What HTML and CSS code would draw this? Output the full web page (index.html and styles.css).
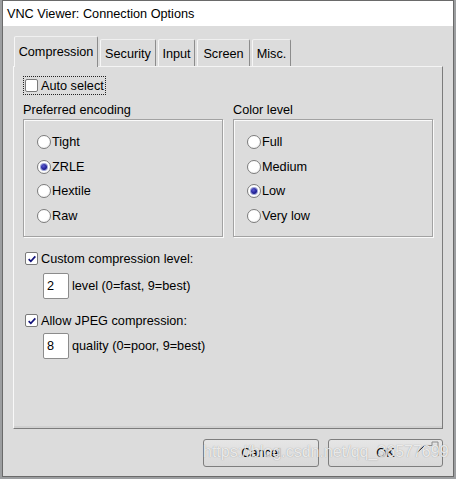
FILE: index.html
```html
<!DOCTYPE html>
<html>
<head>
<meta charset="utf-8">
<link rel="stylesheet" href="styles.css">
</head>
<body>
<div class="window">
  <div class="titlebar">VNC Viewer: Connection Options</div>
  <div class="client">
    <div class="tabs">
      <div class="tab active w-comp">Compression</div>
      <div class="tab w-sec">Security</div>
      <div class="tab w-input">Input</div>
      <div class="tab w-screen">Screen</div>
      <div class="tab w-misc">Misc.</div>
    </div>
    <div class="panel">
      <div class="focus-row">
        <span class="check"></span><span class="lbl">Auto select</span>
      </div>
      <div class="columns">
        <div class="col">
          <div class="group-title">Preferred encoding</div>
          <div class="group">
            <div class="radio-row"><span class="radio"></span><span>Tight</span></div>
            <div class="radio-row"><span class="radio on"></span><span>ZRLE</span></div>
            <div class="radio-row"><span class="radio"></span><span>Hextile</span></div>
            <div class="radio-row"><span class="radio"></span><span>Raw</span></div>
          </div>
        </div>
        <div class="col">
          <div class="group-title">Color level</div>
          <div class="group">
            <div class="radio-row"><span class="radio"></span><span>Full</span></div>
            <div class="radio-row"><span class="radio"></span><span>Medium</span></div>
            <div class="radio-row"><span class="radio on"></span><span>Low</span></div>
            <div class="radio-row"><span class="radio"></span><span>Very low</span></div>
          </div>
        </div>
      </div>
      <div class="check-row first">
        <span class="check"><svg viewBox="0 0 12 12" width="10" height="10"><path d="M2 6.2 L4.6 8.8 L10 2.8" fill="none" stroke="#12127a" stroke-width="2"/></svg></span>
        <span class="lbl">Custom compression level:</span>
      </div>
      <div class="input-row">
        <span class="field">2</span><span class="field-lbl">level (0=fast, 9=best)</span>
      </div>
      <div class="check-row">
        <span class="check"><svg viewBox="0 0 12 12" width="10" height="10"><path d="M2 6.2 L4.6 8.8 L10 2.8" fill="none" stroke="#12127a" stroke-width="2"/></svg></span>
        <span class="lbl">Allow JPEG compression:</span>
      </div>
      <div class="input-row tight">
        <span class="field">8</span><span class="field-lbl">quality (0=poor, 9=best)</span>
      </div>
    </div>
    <div class="buttons">
      <div class="btn">Cancel</div>
      <div class="btn">OK</div>
    </div>
  </div>
</div>
<svg class="grip" width="26" height="16" viewBox="0 0 26 16">
  <path d="M3 12.5 L10 6" stroke="#111" stroke-width="1" fill="none"/>
  <path d="M10.5 5.5 H18 V2 H24 V16" stroke="#8a8a8a" stroke-width="1" fill="none"/>
</svg>
<div class="watermark">https://blog.csdn.net/qq_36577699</div>
</body>
</html>
```

FILE: styles.css
```css
html, body {
  margin: 0;
  padding: 0;
}
body {
  width: 456px;
  height: 479px;
  overflow: hidden;
  position: relative;
  background: #9c9ea0;
  font-family: "Liberation Sans", Arial, sans-serif;
  font-size: 12.7px;
  color: #000;
}
.window {
  margin-left: 2px;
  width: 452px;
  height: 477px;
  box-sizing: border-box;
  border: 1px solid #6a6a6a;
  background: #dcdcdc;
  display: flex;
  flex-direction: column;
}
.titlebar {
  flex: none;
  height: 25px;
  background: #fff;
  padding-left: 4px;
  display: flex;
  align-items: center;
}
.client {
  flex: 1;
  padding: 10px 0 0 10px;
}
.tabs {
  display: flex;
  align-items: flex-end;
  gap: 2px;
  margin-left: 1px;
  height: 30px;
  position: relative;
  z-index: 1;
}
.tab {
  box-sizing: border-box;
  height: 27px;
  border-left: 1px solid #f6f6f6;
  border-top: 1px solid #f0f0f0;
  border-right: 1px solid #8c8c8c;
  border-radius: 2px 2px 0 0;
  background: #dcdcdc;
  display: flex;
  align-items: center;
  justify-content: center;
  padding-top: 2px;
  white-space: nowrap;
}
.tab.active {
  height: 31px;
  margin-bottom: -1px;
  padding-top: 0;
}
.w-comp { width: 84px; }
.w-sec { width: 56px; }
.w-input { width: 37px; }
.w-screen { width: 53px; }
.w-misc { width: 39px; }

.panel {
  box-sizing: border-box;
  width: 430px;
  height: 363px;
  border: 1px solid;
  border-color: #f4f4f4 #7c7c7c #7c7c7c #f8f8f8;
  box-shadow: inset 0 -2px 0 #d0d0d0;
  padding: 9px 0 0 9px;
  display: flex;
  flex-direction: column;
  align-items: flex-start;
}
.focus-row {
  box-sizing: border-box;
  height: 19px;
  border: 1px dotted #222;
  display: flex;
  align-items: center;
  padding: 0 1px 0 1px;
  white-space: nowrap;
}
.check {
  flex: none;
  box-sizing: border-box;
  width: 13px;
  height: 13px;
  background: #fff;
  border: 1px solid #7a7a7a;
  border-radius: 2px;
  display: flex;
  align-items: center;
  justify-content: center;
}
.lbl {
  margin-left: 3px;
  white-space: nowrap;
}
.columns {
  display: flex;
  gap: 10px;
  margin-top: 8px;
}
.col {
  width: 200px;
}
.group-title {
  height: 15px;
  line-height: 15px;
  margin-bottom: 1px;
}
.group {
  box-sizing: border-box;
  height: 118px;
  border: 1px solid #a2a2a2;
  box-shadow: inset 1px 1px 0 #fafafa, 1px 1px 0 #fafafa;
  padding: 9.5px 0 0 13px;
}
.radio-row {
  height: 24.75px;
  display: flex;
  align-items: center;
}
.radio {
  flex: none;
  box-sizing: border-box;
  width: 14px;
  height: 14px;
  border-radius: 50%;
  border: 1px solid #7c7c7c;
  background: radial-gradient(circle at 40% 35%, #fff 0, #fff 55%, #e4e4e4 100%);
  margin-right: 1px;
  display: flex;
  align-items: center;
  justify-content: center;
}
.radio.on::after {
  content: "";
  width: 6px;
  height: 6px;
  border-radius: 50%;
  background: radial-gradient(circle at 40% 35%, #5a5ad0 0, #14148a 70%);
  box-shadow: 0 0 0 1px #9da4d8;
}
.check-row {
  height: 19px;
  display: flex;
  align-items: center;
  margin-top: 12px;
  padding-left: 2px;
}
.input-row {
  display: flex;
  align-items: center;
  margin-top: 5px;
  padding-left: 20px;
}
.input-row.tight {
  margin-top: 3px;
}
.field {
  box-sizing: border-box;
  width: 26px;
  height: 26px;
  background: #fff;
  border: 1px solid #8c8c8c;
  border-radius: 2px;
  padding-left: 3px;
  display: flex;
  align-items: center;
}
.field-lbl {
  margin-left: 3px;
}
.buttons {
  width: 430px;
  display: flex;
  justify-content: flex-end;
  gap: 9px;
  margin-top: 10px;
}
.btn {
  box-sizing: border-box;
  width: 116px;
  height: 28px;
  border: 1px solid #7e7e7e;
  border-radius: 3px;
  background: linear-gradient(#e6e6e6, #d9d9d9);
  display: flex;
  align-items: center;
  justify-content: center;
}
.btn:last-child {
  width: 115px;
}
.grip {
  position: absolute;
  left: 414px;
  top: 440px;
}
.watermark {
  position: absolute;
  left: 203px;
  top: 443px;
  font-family: "Liberation Sans", Arial, sans-serif;
  font-size: 16px;
  line-height: 18px;
  color: rgba(255, 255, 255, 0.8);
  text-shadow: 0 0 1px rgba(90, 90, 90, 0.6);
  white-space: nowrap;
}
```
